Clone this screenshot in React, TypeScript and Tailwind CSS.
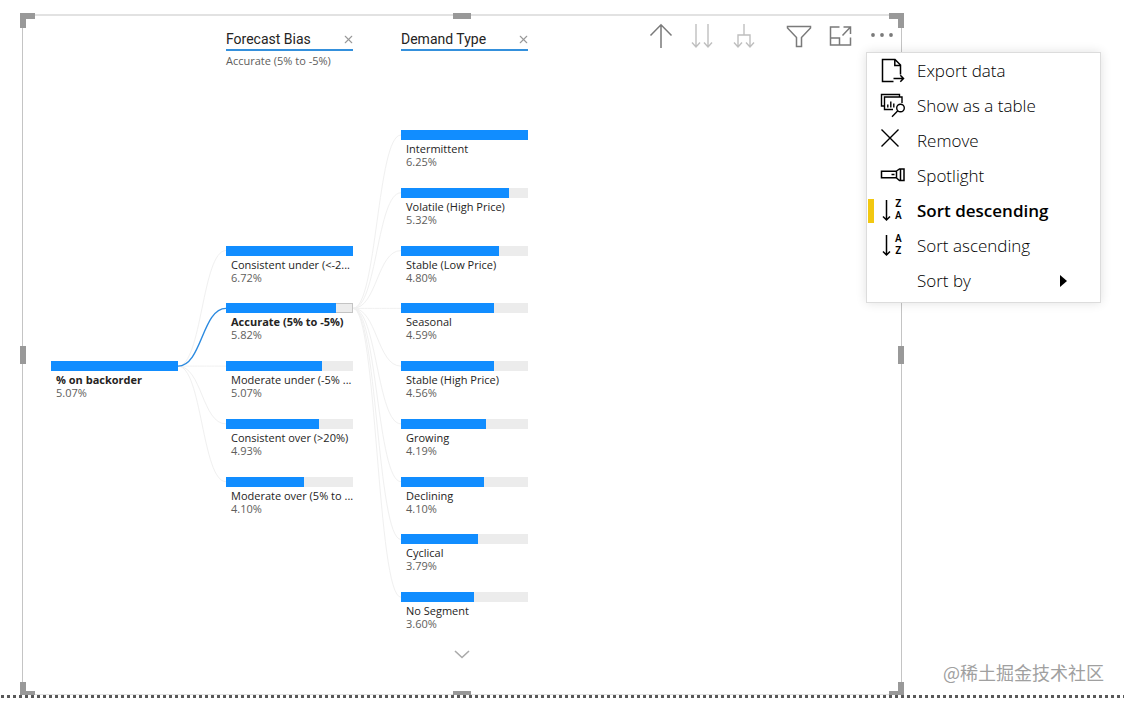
import { useState } from "react";
import clsx from "clsx";
import { X } from "lucide-react";

interface TreeNode {
  label: string;
  value: number;
}

interface MenuItem {
  label: string;
  icon?: React.ReactNode;
  submenu?: boolean;
}

const biasNodes: TreeNode[] = [
  { label: "Consistent under (<-2...", value: 6.72 },
  { label: "Accurate (5% to -5%)", value: 5.82 },
  { label: "Moderate under (-5% ...", value: 5.07 },
  { label: "Consistent over (>20%)", value: 4.93 },
  { label: "Moderate over (5% to ...", value: 4.1 },
];

const demandNodes: TreeNode[] = [
  { label: "Intermittent", value: 6.25 },
  { label: "Volatile (High Price)", value: 5.32 },
  { label: "Stable (Low Price)", value: 4.8 },
  { label: "Seasonal", value: 4.59 },
  { label: "Stable (High Price)", value: 4.56 },
  { label: "Growing", value: 4.19 },
  { label: "Declining", value: 4.1 },
  { label: "Cyclical", value: 3.79 },
  { label: "No Segment", value: 3.6 },
];

const ROW_STARTS = [
  "row-start-1",
  "row-start-2",
  "row-start-3",
  "row-start-4",
  "row-start-5",
  "row-start-6",
  "row-start-7",
  "row-start-8",
  "row-start-9",
];

const menuItems: MenuItem[] = [
  {
    label: "Export data",
    icon: (
      <svg width="26" height="26" viewBox="0 0 26 26" fill="none" stroke="currentColor" strokeWidth="1.5">
        <path d="M13.5 23.5h-11v-22H15L20.5 7v9.5M14.800 1.800v5.700h5.700M13.500 20.500h10M20.300 17.300l3.200 3.200-3.200 3.200" />
      </svg>
    ),
  },
  {
    label: "Show as a table",
    icon: (
      <svg width="26" height="26" viewBox="0 0 26 26" fill="none" stroke="currentColor" strokeWidth="1.4">
        <path d="M4.500 13h-3V1.500h18V4M13 16.500H4.500V4H22v6M7.800 14.500v-3M10.800 14.500v-6M13.800 14.500v-4" />
        <circle cx="20.5" cy="15" r="3.8" />
        <path d="M17.800 17.800 12 23.800" />
      </svg>
    ),
  },
  {
    label: "Remove",
    icon: (
      <svg width="26" height="26" viewBox="0 0 26 26" fill="none" stroke="currentColor" strokeWidth="1.4">
        <path d="m1.500 1.500 17 17M18.500 1.500l-17 17" />
      </svg>
    ),
  },
  {
    label: "Spotlight",
    icon: (
      <svg width="26" height="26" viewBox="0 0 26 26" fill="none" stroke="currentColor" strokeWidth="1.5">
        <path d="M17 8.200H1.500v6.600H17M16.500 8l3-2H24v11.500h-4.500l-3-2.500zM20.500 6v11.500M11.500 11.500h3" />
      </svg>
    ),
  },
  { label: "Sort descending", icon: <SortIcon top="Z" bottom="A" /> },
  { label: "Sort ascending", icon: <SortIcon top="A" bottom="Z" /> },
  { label: "Sort by", submenu: true },
];

function SortIcon({ top, bottom }: { top: string; bottom: string }) {
  return (
    <span className="flex items-center gap-1 pl-0.5">
      <svg width="9" height="22" viewBox="0 0 9 22" fill="none" stroke="currentColor" strokeWidth="1.5">
        <path d="M4.500 0v20M1 16.500 4.500 20 8 16.500" />
      </svg>
      <span className="flex flex-col items-center pb-0.5 font-[Roboto,sans-serif] text-[10px] leading-3 font-semibold">
        <span>{top}</span>
        <span>{bottom}</span>
      </span>
    </span>
  );
}

function Bar({ node, max, row, selected, bold }: { node: TreeNode; max: number; row: number; selected?: boolean; bold?: boolean }) {
  return (
    <button className={clsx("flex flex-col items-stretch text-left", ROW_STARTS[row])}>
      <span className={clsx("block h-2.5 bg-[#ececec]", selected && "outline-1 -outline-offset-1 outline-[#c4c4c4]")}>
        <span className="relative block h-full bg-[#118dff]" style={{ width: `${(node.value / max) * 100}%` }} />
      </span>
      <span className={clsx("mt-0.5 pl-[5px] text-[11px] leading-[13px] whitespace-nowrap text-[#252423]", bold && "font-bold")}>
        {node.label}
      </span>
      <span className="pl-[5px] text-[11px] leading-[13px] text-[#605e5c]">{node.value.toFixed(2)}%</span>
    </button>
  );
}

// Curves from one row to a run of rows in the next level
function Links({ from, to, active, className }: { from: number; to: number[]; active?: number; className: string }) {
  const y = (row: number) => (row * 520) / 9 + 5;
  const curve = (row: number) => `M0 ${y(from)}C24 ${y(from)} 24 ${y(row)} 48 ${y(row)}`;

  return (
    <svg
      viewBox="0 0 48 520"
      preserveAspectRatio="none"
      className={clsx("row-span-9 row-start-1 h-full w-full", className)}
      fill="none"
      aria-hidden="true"
    >
      {to.map((row) => (
        <path key={row} d={curve(row)} stroke="#f0f0f0" />
      ))}
      {active !== undefined && <path d={curve(active)} stroke="#2b8ae0" strokeWidth="1.4" />}
    </svg>
  );
}

function LevelHeader({ title, selection }: { title: string; selection?: string }) {
  return (
    <div>
      <div className="flex items-center justify-between border-b-2 border-[#3490dc] pb-px">
        <h2 className="font-[Roboto,sans-serif] text-sm leading-[17px] text-[#252423]">{title}</h2>
        <button aria-label={`Remove ${title}`} className="text-[#999]">
          <X size={13} strokeWidth={2} className="-mr-0.5" />
        </button>
      </div>
      {selection && <p className="mt-0.5 text-[11px] leading-4 whitespace-nowrap text-[#605e5c]">{selection}</p>}
    </div>
  );
}

function Handles() {
  const base = "absolute border-[#999]";
  return (
    <div aria-hidden="true">
      <span className={clsx(base, "-top-[3px] -left-[3px] size-[15px] border-t-6 border-l-6")} />
      <span className={clsx(base, "-top-[3px] -right-[3px] size-[15px] border-t-6 border-r-6")} />
      <span className={clsx(base, "-bottom-px -left-[3px] h-[13px] w-[15px] border-b-4 border-l-6")} />
      <span className={clsx(base, "-right-[3px] -bottom-px h-[13px] w-[15px] border-r-6 border-b-4")} />
      <span className={clsx(base, "-top-[3px] left-1/2 w-[18px] -translate-x-1/2 border-t-6")} />
      <span className={clsx(base, "-bottom-px left-1/2 w-[18px] -translate-x-1/2 border-b-4")} />
      <span className={clsx(base, "top-1/2 -left-[3px] h-[18px] -translate-y-1/2 border-l-6")} />
      <span className={clsx(base, "top-1/2 -right-[3px] h-[18px] -translate-y-1/2 border-r-6")} />
    </div>
  );
}

export default function App() {
  const [menuOpen, setMenuOpen] = useState(true);
  const [sort, setSort] = useState("Sort descending");

  return (
    <main className="relative min-h-screen overflow-hidden bg-white pt-3.5 font-['Open_Sans','Noto_Sans',sans-serif]">
      <section className="relative mr-[222px] ml-[22px] border-x border-t-2 border-b border-x-[#c4c4c4] border-t-[#e2e2e2] border-b-[#e2e2e2]">
        <Handles />

        <header className="flex h-[114px] items-start pl-7">
          <div className="grid grid-cols-[127px_127px_127px] gap-x-12 pt-[15px]">
            <div className="col-start-2">
              <LevelHeader title="Forecast Bias" selection="Accurate (5% to -5%)" />
            </div>
            <LevelHeader title="Demand Type" />
          </div>

          <div className="ml-auto flex h-10 items-center pr-[3px] text-[#7a7a7a]">
            <button aria-label="Drill up" className="flex w-[42px] justify-center">
              <svg width="24" height="26" viewBox="0 0 24 26" fill="none" stroke="currentColor" strokeWidth="1.5">
                <path d="M12 25V1.500M1.500 12.500 12 1.800l10.500 10.700" />
              </svg>
            </button>
            <button aria-label="Go to next level" className="flex w-[42px] justify-center text-[#bfbfbf]">
              <svg width="24" height="26" viewBox="0 0 24 26" fill="none" stroke="currentColor" strokeWidth="1.4">
                <path d="M5 1v23M1 19.500 5 24l4-4.500M17 1v23M13 19.500 17 24l4-4.500" />
              </svg>
            </button>
            <button aria-label="Expand all down" className="flex w-[42px] justify-center text-[#bfbfbf]">
              <svg width="24" height="26" viewBox="0 0 24 26" fill="none" stroke="currentColor" strokeWidth="1.4">
                <path d="M11 1v11M5 24V12h12v12M1 19.500 5 24l4-4.500M13 19.500 17 24l4-4.500" />
              </svg>
            </button>
            <button aria-label="Filters" className="ml-3 flex w-[42px] justify-center">
              <svg width="26" height="24" viewBox="0 0 26 24" fill="none" stroke="currentColor" strokeWidth="1.5">
                <path d="M1.500 2.500h23V4l-9 9.500v9h-5v-9L1.500 4z" />
              </svg>
            </button>
            <button aria-label="Focus mode" className="flex w-[42px] justify-center">
              <svg width="24" height="22" viewBox="0 0 24 22" fill="none" stroke="currentColor" strokeWidth="1.5">
                <path d="M10.500 2h-9v18h20v-7.500M1.500 13h9v7M13.500 10.500 21.500 2M14.500 2h7v7" />
              </svg>
            </button>
            <div className="relative ml-1 flex w-8 justify-center">
              <button aria-label="More options" aria-expanded={menuOpen} onClick={() => setMenuOpen(!menuOpen)}>
                <svg width="24" height="24" viewBox="0 0 24 24" fill="currentColor">
                  <circle cx="3" cy="11" r="1.9" />
                  <circle cx="12" cy="11" r="1.9" />
                  <circle cx="21" cy="11" r="1.9" />
                </svg>
              </button>

              {menuOpen && (
                <ul className="absolute top-full left-0 z-10 mt-1 w-[235px] border border-[#dcdcdc] bg-white pb-1 shadow-[0_0_10px_rgba(0,0,0,0.12)]">
                  {menuItems.map(({ label, icon, submenu }) => {
                    const active = label === sort;
                    return (
                      <li key={label}>
                        <button
                          onClick={() => !submenu && label.startsWith("Sort") && setSort(label)}
                          className={clsx(
                            "flex h-[35px] w-full items-center pl-px text-left text-[17px] whitespace-nowrap text-black",
                            active ? "font-semibold" : "font-light",
                          )}
                        >
                          <span className={clsx("mr-1.5 h-6 w-1.5", active && "bg-[#f2c811]")} />
                          <span className="flex w-[37px] items-center">{icon}</span>
                          {label}
                          {submenu && (
                            <svg width="8" height="12" viewBox="0 0 8 12" className="mr-8 ml-auto" fill="currentColor">
                              <path d="M0 0 7 6 0 12z" />
                            </svg>
                          )}
                        </button>
                      </li>
                    );
                  })}
                </ul>
              )}
            </div>
          </div>
        </header>

        <div className="grid h-[520px] grid-cols-[127px_48px_127px_48px_127px] grid-rows-9 pl-7">
          <Links className="col-start-2" from={4} to={[2, 4, 5, 6]} active={3} />
          <Links className="col-start-4" from={3} to={[0, 1, 2, 3, 4, 5, 6, 7, 8]} />
          <div className="col-start-1 row-span-9 row-start-1 grid grid-rows-subgrid">
            <Bar node={{ label: "% on backorder", value: 5.07 }} max={5.07} row={4} bold />
          </div>
          <div className="col-start-3 row-span-9 row-start-1 grid grid-rows-subgrid">
            {biasNodes.map((node, i) => (
              <Bar key={node.label} node={node} max={6.72} row={i + 2} selected={i === 1} bold={i === 1} />
            ))}
          </div>
          <div className="col-start-5 row-span-9 row-start-1 grid grid-rows-subgrid">
            {demandNodes.map((node, i) => (
              <Bar key={node.label} node={node} max={6.25} row={i} />
            ))}
          </div>
        </div>

        <div className="grid h-11 grid-cols-[127px_127px_127px] gap-x-12 pl-7">
          <button aria-label="Show more" className="col-start-3 flex items-start justify-center pr-1.5 text-[#aaa]">
            <svg width="16" height="9" viewBox="0 0 16 9" fill="none" stroke="currentColor" strokeWidth="1.6">
              <path d="m1 1 7 6.500L15 1" />
            </svg>
          </button>
        </div>
      </section>

      <div className="h-[3px] bg-[repeating-linear-gradient(90deg,transparent_0_1px,#595959_1px_4px,transparent_4px_6px)]" />

      <p className="absolute right-5 bottom-[18px] font-['Noto_Sans_CJK_SC',sans-serif] text-lg leading-7 text-[#a0a0a0]">
        @稀土掘金技术社区
      </p>
    </main>
  );
}
